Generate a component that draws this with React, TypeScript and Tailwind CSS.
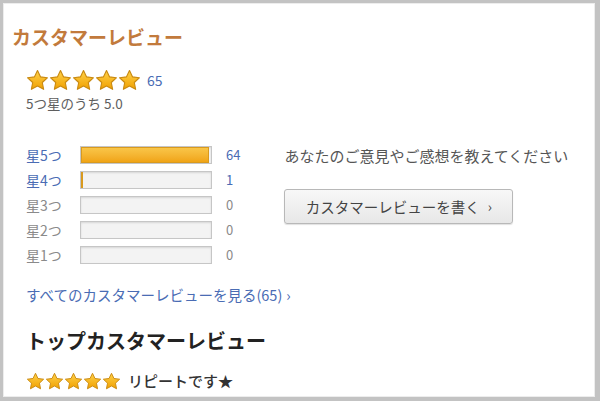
import React from "react";

const font = { fontFamily: '"Noto Sans CJK JP", "Noto Sans", sans-serif' };

function Star({ size }: { size: number }) {
  return (
    <svg width={size} height={size} viewBox="0 0 24 24">
      <defs>
        <linearGradient id="sg" x1="0" y1="0" x2="0" y2="1">
          <stop offset="0%" stopColor="#ffd24a" />
          <stop offset="100%" stopColor="#f0a000" />
        </linearGradient>
      </defs>
      <path
        d="M12 1.6l3.1 6.6 7.2.9-5.3 5 1.4 7.1L12 17.7l-6.4 3.5L7 14.1l-5.3-5 7.2-.9z"
        fill="url(#sg)"
        stroke="#c98a12"
        strokeWidth="1.2"
        strokeLinejoin="round"
      />
    </svg>
  );
}

const rows = [
  { label: "星5つ", count: 64, pct: 98.5, active: true },
  { label: "星4つ", count: 1, pct: 1.5, active: true },
  { label: "星3つ", count: 0, pct: 0, active: false },
  { label: "星2つ", count: 0, pct: 0, active: false },
  { label: "星1つ", count: 0, pct: 0, active: false },
];

export default function App() {
  return (
    <div
      className="h-[401px] w-[600px] overflow-hidden border-t-[3px] border-r-[5px] border-b-[4px] border-l-[3px] border-[#c3c3c3] bg-white"
      style={font}
    >
      <div className="h-full border border-[#ededed] bg-white">
        <h2 className="pt-[21px] pl-[8px] text-[19px] leading-[24px] font-bold text-[#c27a3c]">
          カスタマーレビュー
        </h2>

        <div className="pl-[22px]">
          <div className="mt-[20px] flex items-center">
            <div className="flex gap-0">
              {[0, 1, 2, 3, 4].map((i) => (
                <Star key={i} size={23} />
              ))}
            </div>
            <span className="ml-[6px] text-[14px] text-[#4a6cb4]">65</span>
          </div>
          <p className="mt-[2px] text-[13.5px] leading-[19px] text-[#5e5e5e]">5つ星のうち 5.0</p>

          <div className="mt-[33px] flex">
            <div className="flex flex-col gap-[7px]">
              {rows.map((r) => (
                <div key={r.label} className="flex h-[18px] items-center">
                  <span
                    className={
                      r.active
                        ? "w-[54px] text-[14px] text-[#4a6cb4]"
                        : "w-[54px] text-[14px] text-[#8a8a8a]"
                    }
                  >
                    {r.label}
                  </span>
                  <div className="h-[18px] w-[132px] overflow-hidden border border-[#c6c6c6] bg-[#f3f3f3] shadow-[inset_0_1px_2px_rgba(0,0,0,0.12)]">
                    <div
                      className="h-full bg-gradient-to-b from-[#f9c84a] to-[#f0a20c] shadow-[inset_0_0_0_1px_#d99a1e]"
                      style={{ width: `${r.pct}%` }}
                    />
                  </div>
                  <span
                    className={
                      r.active
                        ? "ml-[14px] text-[13px] text-[#4a6cb4]"
                        : "ml-[14px] text-[13px] text-[#8a8a8a]"
                    }
                  >
                    {r.count}
                  </span>
                </div>
              ))}
            </div>

            <div className="ml-[44px] pt-[0px]">
              <p className="text-[15px] leading-[20px] text-[#555]">
                あなたのご意見やご感想を教えてください
              </p>
              <button className="mt-[23px] flex h-[35px] w-[229px] items-center justify-center rounded-[3px] border border-[#b8b8b8] bg-gradient-to-b from-[#f8f8f8] to-[#e7e7e7] text-[14.5px] text-[#444] shadow-[0_1px_1px_rgba(0,0,0,0.12)]">
                カスタマーレビューを書く
                <span className="ml-[8px] text-[14px]">›</span>
              </button>
            </div>
          </div>

          <p className="mt-[21px] text-[14.5px] leading-[20px] text-[#4a6cb4]">
            すべてのカスタマーレビューを見る(65)<span className="ml-[4px]">›</span>
          </p>

          <h3 className="mt-[23px] text-[20px] leading-[26px] font-bold text-[#222]">
            トップカスタマーレビュー
          </h3>

          <div className="mt-[16px] flex items-center">
            <div className="flex">
              {[0, 1, 2, 3, 4].map((i) => (
                <Star key={i} size={19} />
              ))}
            </div>
            <span className="ml-[7px] text-[15px] font-medium text-[#333]">リピートです★</span>
          </div>
        </div>
      </div>
    </div>
  );
}
